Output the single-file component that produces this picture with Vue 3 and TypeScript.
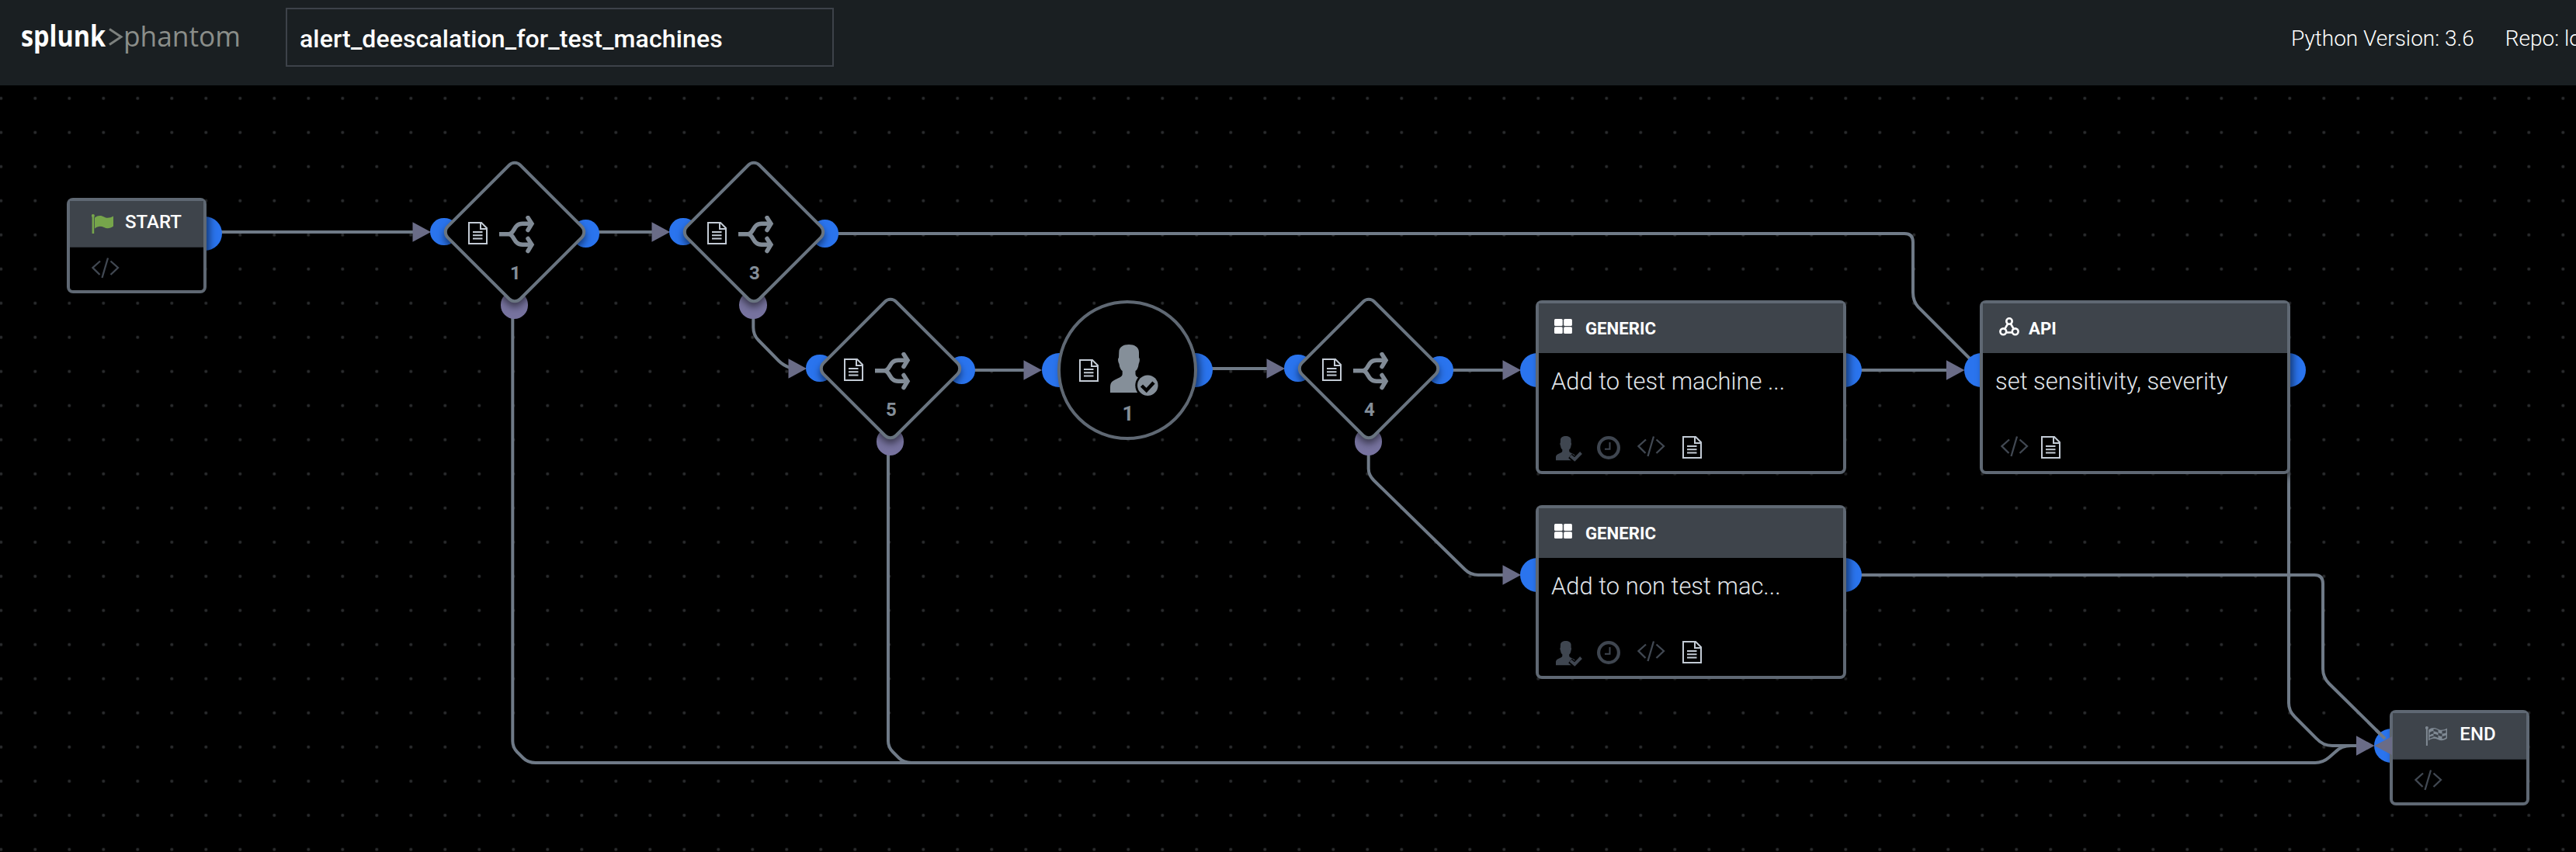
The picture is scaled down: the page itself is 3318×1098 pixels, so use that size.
<script setup lang="ts">
import { ref, h, type FunctionalComponent } from 'vue'

interface Point { id: string; x: number; y: number }
interface Card extends Point { kind: 'generic' | 'api'; type: string; title: string }

const playbookName = ref('alert_deescalation_for_test_machines')

const decisions: Point[] = [
  { id: '1', x: 572, y: 207.5 },
  { id: '3', x: 879.8, y: 207.5 },
  { id: '5', x: 1056, y: 383.5 },
  { id: '4', x: 1672, y: 383.5 },
]

const cards: Card[] = [
  { id: 'g1', x: 1978, y: 387, kind: 'generic', type: 'GENERIC', title: 'Add to test machine ...' },
  { id: 'g2', x: 1978, y: 651, kind: 'generic', type: 'GENERIC', title: 'Add to non test mac...' },
  { id: 'api', x: 2550, y: 387, kind: 'api', type: 'API', title: 'set sensitivity, severity' },
]

const edges: string[] = [
  'M280 299H535',
  'M765 299H845',
  'M1075 301H2453Q2464 301 2464 312V377Q2464 388 2471 396L2540 465',
  'M970.3 405V422Q970.3 432 977 438.500L1003 465Q1009 471 1018 474',
  'M1250 477H1322',
  'M1555 475H1635',
  'M1865 477H1938',
  'M1762.700 580V604Q1762.700 612 1769.500 619L1887 734Q1894 741 1904 741H1938',
  'M2390 477H2510',
  'M2390 741H2981Q2992 741 2992 752V862Q2992 873 3000 881L3072 952',
  'M2948 600V906Q2948 916 2955.500 923.500L2984 952Q2992 961 3004 961H3038',
  'M660.300 405V955Q660.300 963 666 969L674 977Q680 983 690 983H2982Q2992 983 3000 976L3008 969Q3016 961 3028 961H3038',
  'M1144 580V955Q1144 963 1150 969L1158 977Q1164 983 1174 983H2982',
]

const arrows: [number, number][] = [
  [555, 299], [863, 299], [1039, 475], [1342, 477], [1655, 475],
  [1959, 477], [1959, 741], [2530.5, 477], [3058.5, 961],
]

const person = 'M24 0C17 0 11.300 3 11.300 10L11 17C9.500 18 10 22 11.500 25C12 30 14 33 15.700 34V38C15.500 41 13 42 9 44C3 47 0 48 0 55V62H48V55C48 48 45 47 39 44C35 42 32.700 41 32.500 38V34C34.500 33 36 30 36.700 25C38 22 38.500 18 37 17V10C37 3 31 0 24 0Z'

const DocIcon: FunctionalComponent = () =>
  h('svg', { width: 25, height: 29, viewBox: '0 0 25 29', fill: 'none', stroke: '#c3cbd5', 'stroke-width': 2 }, [
    h('path', { d: 'M1 1H17L24 8V28H1Z' }),
    h('path', { d: 'M16 1V9H24' }),
    h('path', { d: 'M6 13H18.500M6 17.200H18.500M6 21.400H18.500' }),
  ])

const CodeIcon: FunctionalComponent = () =>
  h('svg', { width: 36, height: 27, viewBox: '0 0 36 27', fill: 'none', stroke: '#414852', 'stroke-width': 2.3 }, [
    h('path', { d: 'M11 4.500L1.500 13L10.500 22M21 .5L13.500 26M24.500 4.500L34 13L24.500 22' }),
  ])
</script>

<template>
  <div class="app">
    <header class="topbar">
      <svg class="logo" width="284" height="70" viewBox="0 0 284 70">
        <text x="0" y="45" textLength="109" lengthAdjust="spacingAndGlyphs" class="brand">splunk</text>
        <path d="M114 22.500L129 32.500L114 42.500" fill="none" stroke="#7d817e" stroke-width="3" />
        <text x="132" y="45" textLength="151" lengthAdjust="spacingAndGlyphs" class="product">phantom</text>
      </svg>
      <input v-model="playbookName" class="name" type="text" spellcheck="false" />
      <div class="meta">
        <span>Python Version: 3.6</span>
        <span>Repo: local</span>
      </div>
    </header>

    <main class="canvas">
      <svg class="edges" width="3318" height="988" viewBox="0 110 3318 988">
        <defs>
          <pattern id="grid" width="44" height="44" patternUnits="userSpaceOnUse" x="-20.700" y="16.700">
            <circle cx="22" cy="22" r="2" fill="#2b2d2f" />
          </pattern>
        </defs>
        <rect y="110" width="3318" height="988" fill="url(#grid)" />
        <path v-for="d in edges" :key="d" :d="d" class="edge" />
        <path v-for="[x, y] in arrows" :key="x + '-' + y" :d="`M${x} ${y}l-23.500 -12.700v25.400z`" class="arrow" />
      </svg>

      <!-- start -->
      <section class="node terminal start">
        <i class="port big right mid-terminal"></i>
        <div class="box">
          <div class="head">
            <svg width="29" height="26" viewBox="0 0 29 26" fill="#76a54b">
              <circle cx="1.900" cy="2" r="2" />
              <rect x=".6" y="1" width="2.600" height="24" />
              <path d="M4 4.500C8 1 13 1.500 16 3.500S24 5 28 2.500V15.500C24 18.500 20 19 16 17S8 15 4 18.500Z" />
            </svg>
            <span>START</span>
          </div>
          <div class="body"><CodeIcon /></div>
        </div>
      </section>

      <!-- decisions -->
      <section v-for="d in decisions" :key="d.id" class="node decision" :style="{ left: d.x + 'px', top: d.y - 110 + 'px' }">
        <i class="port in"></i>
        <i class="port out"></i>
        <i class="port alt"></i>
        <div class="shape"></div>
        <div class="content">
          <div class="icons">
            <DocIcon class="doc" />
            <svg width="46" height="49" viewBox="0 0 46 49" fill="none" stroke="#818b96" stroke-width="5.500">
              <path d="M0 23.800H12C20 23.800 18 10.300 30 10.300H42M12 23.800C20 23.800 18 37.300 30 37.300H42" />
              <path d="M37 2.500L42 10.300L37 18.500M37 29.500L42 37.300L37 45.500" stroke-linecap="round" />
            </svg>
          </div>
          <span class="num">{{ d.id }}</span>
        </div>
      </section>

      <!-- prompt -->
      <section class="node prompt">
        <i class="port big left"></i>
        <i class="port big right"></i>
        <div class="ring">
          <div class="icons">
            <DocIcon class="doc" />
            <svg width="63" height="67" viewBox="0 0 63 67" fill="#858f99">
              <path :d="person" />
              <circle cx="48.300" cy="52.700" r="16" fill="#000" />
              <circle cx="48.300" cy="52.700" r="13.300" />
              <path d="M40.500 53L46.700 59L56 49" fill="none" stroke="#000" stroke-width="4.500" />
            </svg>
          </div>
          <span class="num">1</span>
        </div>
      </section>

      <!-- actions -->
      <section v-for="c in cards" :key="c.id" class="node card" :class="c.kind" :style="{ left: c.x + 'px', top: c.y - 110 + 'px' }">
        <i class="port big left"></i>
        <i class="port big right"></i>
        <div class="box">
          <div class="head">
            <svg v-if="c.kind === 'generic'" width="23" height="19" viewBox="0 0 23 19" fill="#fff">
              <rect width="10.700" height="9" rx="1.500" />
              <rect x="12.200" width="10.700" height="9" rx="1.500" />
              <rect y="10.200" width="10.700" height="8.800" rx="1.500" />
              <rect x="12.200" y="10.200" width="10.700" height="8.800" rx="1.500" />
            </svg>
            <svg v-else width="26" height="24" viewBox="0 0 26 24" fill="none" stroke="#fff" stroke-width="2.600">
              <circle cx="13" cy="5" r="3.700" />
              <circle cx="5.300" cy="18.300" r="3.900" />
              <circle cx="20.700" cy="18.300" r="3.900" />
              <path d="M11 8.500L7.300 14.800M15 8.500L18.700 14.800M9.500 19.500H16.500" />
            </svg>
            <span>{{ c.type }}</span>
          </div>
          <div class="body">
            <p>{{ c.title }}</p>
            <div class="tools">
              <template v-if="c.kind === 'generic'">
                <svg class="t-person" width="35" height="33" viewBox="0 0 35 33" fill="#3f4650">
                  <path :d="person" transform="scale(.53 .505)" />
                  <path d="M18.500 25.500L24.200 30.500L33 21.500" fill="none" stroke="#000" stroke-width="7" />
                  <path d="M18.800 25.500L24.200 30L32.500 21.500" fill="none" stroke="#3f4650" stroke-width="4" />
                </svg>
                <svg class="t-clock" width="30" height="30" viewBox="0 0 30 30" fill="none" stroke="#3f4650">
                  <circle cx="15" cy="15" r="12.900" stroke-width="4.200" />
                  <path d="M16.500 8V16.800H10" stroke-width="2" />
                </svg>
              </template>
              <CodeIcon class="t-code" />
              <DocIcon class="t-doc" />
            </div>
          </div>
        </div>
      </section>

      <!-- end -->
      <section class="node terminal end">
        <i class="port big left mid-terminal"></i>
        <div class="box">
          <div class="head">
            <svg width="29" height="26" viewBox="0 0 29 26" fill="#7f8993">
              <circle cx="1.900" cy="2" r="2" />
              <rect x=".9" y="1" width="2" height="24" />
              <path d="M4 4.500C8 1 13 1.500 16 3.500S24 5 28 2.500V15.500C24 18.500 20 19 16 17S8 15 4 18.500Z" />
              <path d="M5.500 8Q8 6 10.500 6V9.500Q8 9.500 5.500 11.500ZM16.500 8Q19 9.500 21.500 9.500V13Q19 13 16.500 11.500ZM10.500 3.200Q13.500 3 16.500 5V8.200Q13.500 6.500 10.500 6.200ZM21.500 5.800Q24 6 26.500 5V8.500Q24 9.500 21.500 9.500ZM10.500 9.800Q13.500 10 16.500 11.500V15Q13.500 13.500 10.500 13ZM5.500 13.500Q8 12.500 10.500 12.300V14Q8 14.500 5.500 16ZM21.500 13Q24 12.800 26.500 11.500V14.500Q24 16 21.500 16.200Z" fill="#3d434b" />
            </svg>
            <span>END</span>
          </div>
          <div class="body"><CodeIcon /></div>
        </div>
      </section>

      <svg class="edges over" width="3318" height="988" viewBox="0 110 3318 988">
        <path d="M3060 940.200L3072 952" class="edge" />
        <path d="M3058.500 961L3081 949V973Z" class="arrow" />
      </svg>
    </main>
  </div>
</template>

<style>
body {
  background: #000;
  overflow: hidden;
}
</style>

<style scoped>
.app {
  width: 3318px;
  height: 1098px;
  overflow: hidden;
  background: #000;
  color: #fff;
  font-family: Roboto, "Liberation Sans", sans-serif;
}
.topbar {
  display: flex;
  align-items: flex-start;
  height: 110px;
  background: #1a1f22;
  overflow: hidden;
}
.logo {
  flex: none;
  margin: 15px 0 0 27px;
  overflow: visible;
}
.brand {
  font: 700 38px "Open Sans", "Noto Sans", sans-serif;
  fill: #fff;
}
.product {
  font: 400 36px "Open Sans", "Noto Sans", sans-serif;
  fill: #8b8e8a;
}
.name {
  flex: none;
  box-sizing: border-box;
  width: 706px;
  height: 76px;
  margin: 10px 0 0 57px;
  padding: 4px 0 0 16px;
  border: 2px solid #3d4249;
  border-radius: 0;
  outline: none;
  background: transparent;
  color: #fff;
  font: 500 32px Roboto, sans-serif;
  letter-spacing: .12px;
}
.meta {
  flex: none;
  display: flex;
  gap: 40px;
  margin: 32px 0 0 1877px;
  font-size: 28px;
  font-weight: 300;
  line-height: 36px;
  white-space: nowrap;
}
.canvas {
  position: relative;
  height: 988px;
}
.edges {
  position: absolute;
  left: 0;
  top: 0;
}
.edge {
  fill: none;
  stroke: #6f7a87;
  stroke-width: 4;
}
.arrow {
  fill: #6a6c87;
}
.node {
  position: absolute;
}
.port {
  position: absolute;
  width: 35.400px;
  height: 35.400px;
  border-radius: 50%;
  background: #2a74ee;
}
.port.big {
  width: 44px;
  height: 44px;
  top: 68px;
}
.port.big.mid-terminal { top: 24px; }
.port.left { left: -20px; }
.port.right { right: -20px; }

.box {
  position: relative;
  box-sizing: border-box;
  border: 4px solid #5f6873;
  border-radius: 8px;
  background: #000;
  box-shadow: 4px 4px 10px rgba(0, 0, 0, .5);
  height: 100%;
  display: flex;
  flex-direction: column;
}
.head {
  display: flex;
  align-items: center;
  background: #3e444b;
  flex: none;
}
.terminal {
  width: 180px;
  height: 123px;
}
.start { left: 86px; top: 145px; }
.end { left: 3078px; top: 805px; }
.terminal .head {
  box-sizing: border-box;
  height: 60px;
  justify-content: center;
  gap: 14px;
  border-bottom: 1px solid #2c3137;
  font-size: 24px;
  font-weight: 500;
}
.end .head {
  gap: 15px;
  padding-left: 3px;
}
.terminal .head span { padding-bottom: 6px; }
.terminal .body { padding: 13px 0 0 28px; }

.card {
  width: 400px;
  height: 224px;
}
.card .head {
  height: 64px;
  padding-left: 20px;
  gap: 17px;
  font-size: 22.200px;
  font-weight: 700;
}
.card.api .head { padding-left: 21px; gap: 12px; }
.card .head svg { margin-top: -5px; }
.card .body {
  flex: 1;
  display: flex;
  flex-direction: column;
  padding: 19px 16px 12px;
}
.card p {
  margin: 0;
  font-size: 30.900px;
  font-weight: 300;
  line-height: 36px;
  white-space: nowrap;
  color: #e1e5ea;
}
.tools {
  display: flex;
  align-items: flex-start;
  height: 33px;
  margin-top: auto;
  padding-left: 6px;
}
.t-clock { margin-left: 18px; }
.t-code { margin-left: 21.500px; }
.t-doc { margin-left: 22.500px; }
.api .t-code { margin-left: 1px; }
.api .t-doc { margin-left: 16px; }

.decision {
  width: 182px;
  height: 182px;
}
.port.in { left: -17.700px; top: 73.500px; }
.port.out { left: 164.800px; top: 75.800px; }
.port.alt { left: 72.700px; top: 167.800px; background: #77739f; }
.shape {
  position: absolute;
  left: 23px;
  top: 23px;
  box-sizing: border-box;
  width: 136px;
  height: 136px;
  border: 4px solid #697480;
  border-radius: 12px;
  background: #000;
  box-shadow: 4px 4px 10px rgba(0, 0, 0, .5);
  transform: rotate(45deg);
}
.content {
  position: relative;
  display: flex;
  flex-direction: column;
  padding-top: 70px;
}
.icons {
  display: flex;
  align-items: flex-start;
}
.decision .icons { padding-left: 31px; }
.decision .doc { margin: 8px 15px 0 0; }
.num {
  display: block;
  text-align: center;
  color: #848e98;
  font-weight: 700;
}
.decision .num {
  margin-top: 11px;
  padding-left: 2px;
  font-size: 24px;
  line-height: 28px;
}
.prompt {
  left: 1362px;
  top: 277px;
  width: 180px;
  height: 180px;
}
.ring {
  position: relative;
  box-sizing: border-box;
  height: 180px;
  padding-top: 53px;
  border: 4px solid #5f6873;
  border-radius: 50%;
  background: #000;
  box-shadow: 4px 4px 10px rgba(0, 0, 0, .5);
}
.prompt .icons { padding-left: 24px; }
.prompt .doc { margin: 19px 15px 0 0; }
.prompt .num {
  margin-top: 7px;
  padding-left: 2px;
  font-size: 26px;
  line-height: 30px;
}
</style>
